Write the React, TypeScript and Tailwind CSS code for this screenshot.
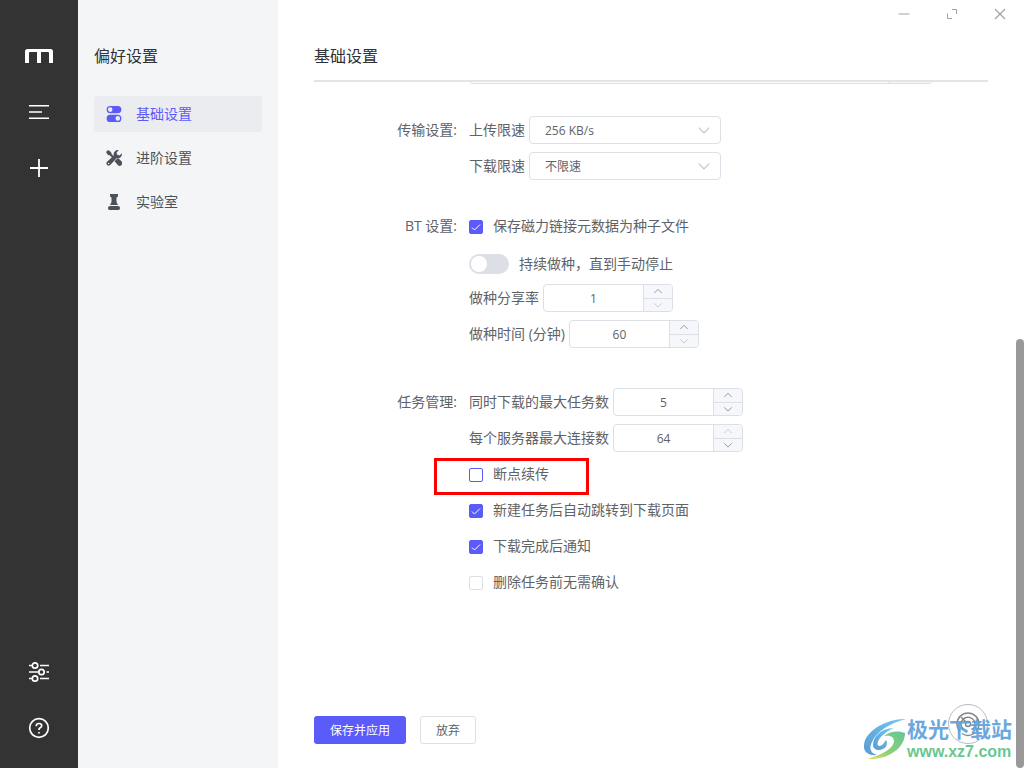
import { useState } from 'react'
import type { ReactNode } from 'react'
import clsx from 'clsx'

// --- Style constants ---

const FONT = "font-['Open_Sans','Noto_Sans_CJK_SC',sans-serif]"
const FIELD_BORDER = 'rounded border border-[#dcdfe6] bg-white'

// --- Icons ---

function LogoIcon() {
  return (
    <svg width="28" height="24" viewBox="0 0 28 24" fill="#fff" aria-hidden="true">
      <path d="M0 19V7.500Q0 5 2.500 5h23Q28 5 28 7.500V19h-4V9q0-1-1-1h-7v11h-4V8H5Q4 8 4 9v10z" />
    </svg>
  )
}

function ListIcon() {
  return (
    <svg width="24" height="24" fill="none" stroke="#fff" strokeWidth="1.5" aria-hidden="true">
      <path d="M2 5.750h20M2 12h13M2 18.250h20" />
    </svg>
  )
}

function PlusIcon() {
  return (
    <svg width="24" height="24" fill="none" stroke="#fff" strokeWidth="1.8" aria-hidden="true">
      <path d="M12 3v18M3 12h18" />
    </svg>
  )
}

function SlidersIcon() {
  return (
    <svg width="24" height="24" fill="none" stroke="#fff" strokeWidth="1.7" aria-hidden="true">
      <path d="M2 5.500h3M13 5.500h9M2 12h9.500M19.500 12H22M2 18.500h3M13 18.500h9" />
      <circle cx="8" cy="5.5" r="2.7" />
      <circle cx="14.5" cy="12" r="2.7" />
      <circle cx="8" cy="18.5" r="2.7" />
    </svg>
  )
}

function HelpIcon() {
  return (
    <svg width="24" height="24" fill="none" stroke="#fff" strokeWidth="1.7" aria-hidden="true">
      <circle cx="12" cy="12" r="9.3" />
      <path d="M9.300 10.200V9.800q0-2.300 2.700-2.300t2.700 2.200q0 1.300-1.500 2-1.200.6-1.200 1.800v.5M12 16v1.500" />
    </svg>
  )
}

function BasicIcon() {
  return (
    <svg width="16" height="16" fill="currentColor" fillRule="evenodd" aria-hidden="true">
      <path d="M4.200 0h7.600a3.600 3.600 0 0 1 0 7.200H4.200a3.600 3.600 0 0 1 0-7.200zM4.200 1.300a2.300 2.300 0 1 0 0 4.600 2.300 2.300 0 0 0 0-4.600z" />
      <path d="M4.200 8.800h7.600a3.600 3.600 0 0 1 0 7.200H4.200a3.600 3.600 0 0 1 0-7.200zM11.800 10.100a2.300 2.300 0 1 0 0 4.600 2.300 2.300 0 0 0 0-4.600z" />
    </svg>
  )
}

function AdvancedIcon() {
  return (
    <svg width="16" height="16" viewBox="0 0 16 16" fill="currentColor" aria-hidden="true">
      <path d="M2 0 5 2l.6 2L8.200 6.700 6.700 8.200 4 5.600 2 5 0 2z" />
      <path d="M15.800 3.200 13.500 5.500l-2.300-.7-.7-2.300L12.800.2A4.200 4.200 0 0 0 7.800 5.500L.8 12a2.300 2.300 0 0 0 3.200 3.200l6.600-7a4.200 4.200 0 0 0 5.200-5zM2.600 14.200a.7.700 0 1 1 0-1.400.7.700 0 0 1 0 1.400z" fillRule="evenodd" />
      <path d="m8.500 11.200 3-3q1.300.3 2.200 1.200l1.700 1.800a2.500 2.500 0 0 1-3.600 3.900z" />
    </svg>
  )
}

function LabIcon() {
  return (
    <svg width="16" height="16" fill="currentColor" aria-hidden="true">
      <path d="M4 0h8v2.500l-1.500 1v4.500l1.500 3H4L5.500 8V3.500L4 2.500zM4 12h8q2 0 2 2t-1.500 2h-9Q2 16 2 14t2-2z" />
    </svg>
  )
}

function Chevron({ up, className }: { up?: boolean; className?: string }) {
  return (
    <svg
      viewBox="0 0 12 12"
      className={clsx('pointer-events-none fill-none stroke-current', className)}
      aria-hidden="true"
    >
      <path d={up ? 'M1.500 8.500 6 4l4.500 4.500' : 'M1.500 4 6 8.500 10.500 4'} />
    </svg>
  )
}

// --- Form pieces ---

function FormItem({ label, children }: { label: string; children: ReactNode }) {
  return (
    <div role="group" aria-label={label} className="flex">
      <div className="w-[155px] shrink-0 pr-3 text-right leading-9">{label}:</div>
      <div className="min-w-0 flex-1">{children}</div>
    </div>
  )
}

function SelectRow({ id, label, options }: { id: string; label: string; options: string[] }) {
  return (
    <div className="flex h-9 items-center gap-1">
      <label htmlFor={id}>{label}</label>
      <div className="grid w-48 items-center">
        <select
          id={id}
          className={clsx('col-start-1 row-start-1 h-7 w-full appearance-none pt-0.5 pl-[15px] text-xs text-[#606266] outline-none', FIELD_BORDER)}
        >
          {options.map(o => <option key={o}>{o}</option>)}
        </select>
        <Chevron className="col-start-1 row-start-1 mr-2.5 size-3.5 justify-self-end text-[#c0c4cc]" />
      </div>
    </div>
  )
}

function NumberRow({ id, label, initial, min, max }: {
  id: string
  label: string
  initial: number
  min: number
  max: number
}) {
  const [value, setValue] = useState(initial)
  const clamp = (n: number) => Math.min(max, Math.max(min, n))
  const button = 'flex flex-1 items-center justify-center text-[#85888e] disabled:text-[#c0c4cc]'

  return (
    <div className="flex h-9 items-center gap-1">
      <label htmlFor={id}>{label}</label>
      <div className={clsx('flex h-7 w-[130px] overflow-hidden', FIELD_BORDER)}>
        <input
          id={id}
          inputMode="numeric"
          value={value}
          onChange={e => setValue(clamp(Number(e.target.value) || min))}
          className="min-w-0 flex-1 pt-0.5 text-center text-xs text-[#606266] outline-none"
        />
        <div className="flex w-[29px] flex-col border-l border-[#dcdfe6] bg-[#f5f7fa]">
          <button type="button" aria-label="增加" disabled={value >= max} onClick={() => setValue(clamp(value + 1))} className={clsx(button, 'border-b border-[#dcdfe6]')}>
            <Chevron up className="size-2.5" />
          </button>
          <button type="button" aria-label="减少" disabled={value <= min} onClick={() => setValue(clamp(value - 1))} className={button}>
            <Chevron className="size-2.5" />
          </button>
        </div>
      </div>
    </div>
  )
}

function CheckRow({ label, checked, focused }: { label: string; checked?: boolean; focused?: boolean }) {
  return (
    <label className="flex h-9 w-fit items-center gap-2.5">
      <span className="mt-0.5 grid size-3.5 place-items-center">
        <input
          type="checkbox"
          defaultChecked={checked}
          className={clsx(
            'peer col-start-1 row-start-1 size-3.5 appearance-none rounded-xs border bg-white',
            'checked:border-[#5b5bfa] checked:bg-[#5b5bfa]',
            focused ? 'border-[#5b5bfa]' : 'border-[#dcdfe6]',
          )}
        />
        <svg width="14" height="14" className="pointer-events-none col-start-1 row-start-1 hidden fill-none stroke-white peer-checked:block" aria-hidden="true">
          <path d="m3 7.500 2.500 2.500L11 4.500" />
        </svg>
      </span>
      {label}
    </label>
  )
}

// --- Layout ---

const NAV = [
  { title: '基础设置', icon: BasicIcon, active: true },
  { title: '进阶设置', icon: AdvancedIcon },
  { title: '实验室', icon: LabIcon },
]

function AppSidebar() {
  return (
    <aside className="flex w-[78px] shrink-0 flex-col items-center justify-between bg-[#333] pt-11 pb-7">
      <div className="flex flex-col items-center gap-8">
        <a href="#home" aria-label="Motrix"><LogoIcon /></a>
        <button type="button" aria-label="任务列表"><ListIcon /></button>
        <button type="button" aria-label="新建任务"><PlusIcon /></button>
      </div>
      <div className="flex flex-col items-center gap-8">
        <button type="button" aria-label="偏好设置"><SlidersIcon /></button>
        <button type="button" aria-label="帮助"><HelpIcon /></button>
      </div>
    </aside>
  )
}

function PreferenceNav() {
  return (
    <aside className="w-[200px] shrink-0 bg-[#f4f5f7] px-4 pt-11">
      <h2 className="text-base leading-6 text-[#303133]">偏好设置</h2>
      <nav className="mt-7 flex flex-col gap-2">
        {NAV.map(({ title, icon: Icon, active }) => (
          <a
            key={title}
            href="#settings"
            className={clsx(
              'flex h-9 items-center gap-3.5 rounded-[3px] px-3 text-sm',
              active ? 'bg-[#eaecf0] text-[#5b5bfa]' : 'text-[#4d515a]',
            )}
          >
            <Icon />
            {title}
          </a>
        ))}
      </nav>
    </aside>
  )
}

function WindowControls() {
  const control = 'flex w-12 items-center justify-center'
  return (
    <div className="flex h-7 shrink-0 justify-end text-[#a0a2a6]">
      <button type="button" aria-label="最小化" className={control}>
        <svg width="12" height="12" stroke="currentColor" strokeWidth="1"><path d="M.5 6h11" /></svg>
      </button>
      <button type="button" aria-label="最大化" className={control}>
        <svg width="12" height="12" fill="none" stroke="currentColor"><path d="M6 1.500h4.500V6M1.500 5.500v5H6" /></svg>
      </button>
      <button type="button" aria-label="关闭" className={control}>
        <svg width="12" height="12" fill="none" stroke="currentColor" strokeWidth="1.2"><path d="m1 1 10 10M11 1 1 11" /></svg>
      </button>
    </div>
  )
}

function SpeedButton() {
  return (
    <button type="button" aria-label="速度" className="absolute right-9 bottom-6 flex size-10 items-center justify-center rounded-full border border-[#b9bbbf] bg-white text-[#85888e]">
      <svg width="26" height="26" fill="none" stroke="currentColor" strokeWidth="1.5" aria-hidden="true">
        <path d="M5 20.500A11 11 0 1 1 21 20.500M8.500 18.500A7 7 0 1 1 18.500 17.500M7 22.500q6 4 12 0" />
        <circle cx="13" cy="13" r="2.5" />
        <path d="m6 6 5 5" />
      </svg>
    </button>
  )
}

function Watermark() {
  return (
    <div className="pointer-events-none absolute right-3 bottom-1.5 flex items-center opacity-90">
      <svg width="44" height="44" viewBox="0 0 44 44" aria-hidden="true">
        <defs>
          <linearGradient id="wm-top" x1="0" y1="1" x2="1" y2="0">
            <stop offset="0" stopColor="#4a90d0" />
            <stop offset="1" stopColor="#62c4f0" />
          </linearGradient>
          <linearGradient id="wm-bottom" x1="0" y1="1" x2="1" y2="0">
            <stop offset="0" stopColor="#e6dc4a" />
            <stop offset=".4" stopColor="#7fcc6c" />
            <stop offset="1" stopColor="#55c08a" />
          </linearGradient>
        </defs>
        <path d="M43 1C26 0 2 12 1 27c-1 7 5 11 13 10-7-2-8-7-5-13C14 13 27 5 43 1z" fill="url(#wm-top)" />
        <path d="M31 10C18 10 10 19 10 27c0 5 6 6 10 4s5-6 3-9c-2 3-4 6-7 6-3-1-1-7 4-11 3-3 6-5 11-7z" fill="url(#wm-top)" />
        <path d="M21 18C28 12 37 13 42 15 42 29 27 42 4 41c15-4 27-11 27-18 0-5-5-6-10-5z" fill="url(#wm-bottom)" />
      </svg>
      <div className="font-['Liberation_Sans','Noto_Sans_CJK_SC',sans-serif] font-bold">
        <div className="text-[21px] leading-6 text-[#5b9fdc]">极光下载站</div>
        <div className="text-base leading-5 text-[#5cc283]">www.xz7.com</div>
      </div>
    </div>
  )
}

export default function App() {
  return (
    <div className={clsx('flex h-screen overflow-hidden bg-white text-sm text-[#606266]', FONT)}>
      <AppSidebar />
      <PreferenceNav />

      <main className="relative flex min-w-0 flex-1 flex-col">
        <WindowControls />
        <header className="mx-9 shrink-0 border-b-2 border-[#e4e4e4] pt-4 pb-3">
          <h1 className="text-base leading-6 text-[#303133]">基础设置</h1>
        </header>

        <form className="flex min-h-0 flex-1 flex-col" onSubmit={e => e.preventDefault()}>
          <div className="min-h-0 flex-1 overflow-hidden px-9">
            {/* Tail of the folder field, scrolled under the header */}
            <div className="flex h-0.5 items-end overflow-hidden pl-[155px]">
              <div className={clsx('flex h-7 w-[464px] overflow-hidden', FIELD_BORDER)}>
                <input aria-label="默认下载路径" className="min-w-0 flex-1 outline-none" />
                <button type="button" aria-label="选择文件夹" className="w-11 border-l border-[#dcdfe6] bg-[#f5f7fa]" />
              </div>
            </div>

            <div className="pt-7">
              <FormItem label="传输设置">
                <SelectRow id="upload" label="上传限速" options={['256 KB/s', '512 KB/s', '1 MB/s', '不限速']} />
                <SelectRow id="download" label="下载限速" options={['不限速', '256 KB/s', '512 KB/s', '1 MB/s']} />
              </FormItem>
            </div>

            <div className="pt-6">
              <FormItem label="BT 设置">
                <CheckRow label="保存磁力链接元数据为种子文件" checked />
                <label className="flex h-9 w-fit items-center gap-2.5 pt-1">
                  <input
                    type="checkbox"
                    role="switch"
                    className="h-5 w-10 appearance-none rounded-full bg-[#dcdfe6] p-0.5 before:block before:size-4 before:rounded-full before:bg-white checked:bg-[#5b5bfa] checked:before:ml-5"
                  />
                  持续做种，直到手动停止
                </label>
                <NumberRow id="ratio" label="做种分享率" initial={1} min={1} max={100} />
                <NumberRow id="seed-time" label="做种时间 (分钟)" initial={60} min={60} max={525600} />
              </FormItem>
            </div>

            <div className="pt-8">
              <FormItem label="任务管理">
                <NumberRow id="max-tasks" label="同时下载的最大任务数" initial={5} min={1} max={10} />
                <NumberRow id="max-connections" label="每个服务器最大连接数" initial={64} min={1} max={64} />
                <div className="relative w-fit">
                  <CheckRow label="断点续传" focused />
                  <div className="pointer-events-none absolute top-0.5 -left-[35px] h-[37px] w-[155px] border-3 border-[#f00]" />
                </div>
                <CheckRow label="新建任务后自动跳转到下载页面" checked />
                <CheckRow label="下载完成后通知" checked />
                <CheckRow label="删除任务前无需确认" />
              </FormItem>
            </div>
          </div>

          <div className="flex shrink-0 gap-3.5 px-9 pt-4 pb-6 text-xs">
            <button type="submit" className="h-7 rounded-[3px] bg-[#5b5bfa] px-4 pt-0.5 text-white">保存并应用</button>
            <button type="button" className="h-7 rounded-[3px] border border-[#dcdfe6] bg-white px-[15px] pt-0.5">放弃</button>
          </div>
        </form>

        <SpeedButton />
        <Watermark />
        <div className="absolute right-0 bottom-0 h-[429px] w-2 rounded-full bg-[#999]" />
      </main>
    </div>
  )
}
